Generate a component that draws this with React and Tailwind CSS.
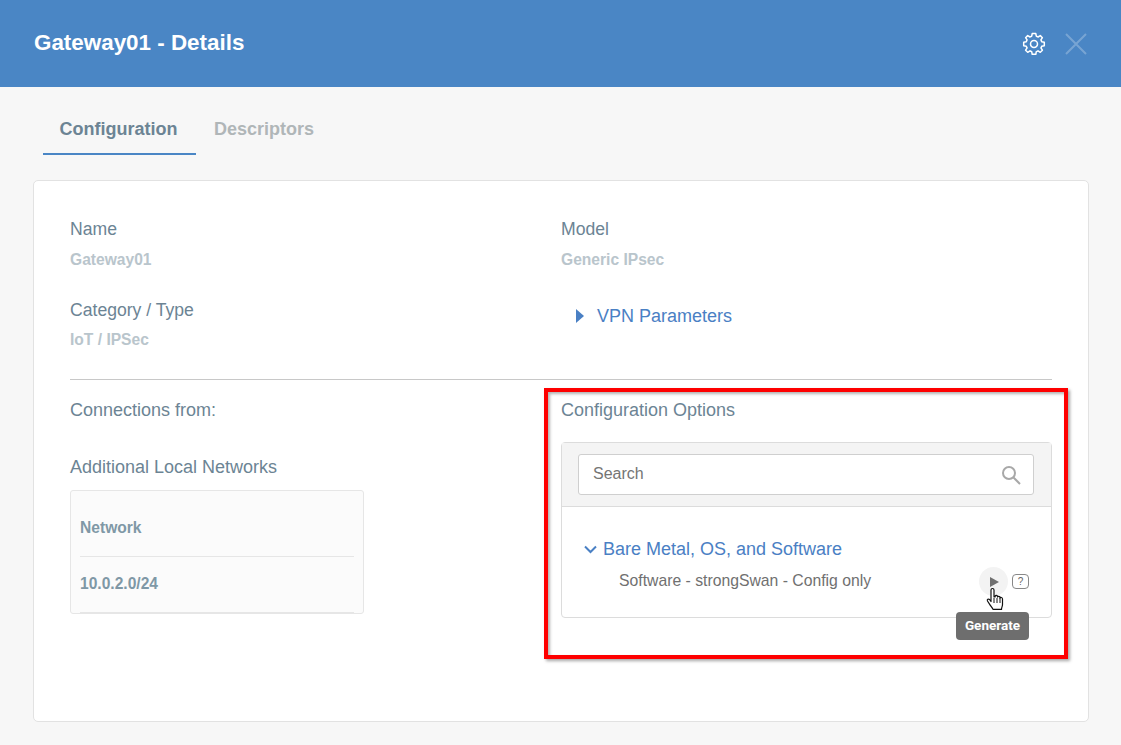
import React from "react";

const Arial = "font-['Liberation_Sans',Arial,sans-serif]";

function Field({ label, value, gap = "mt-[11px]" }) {
  return (
    <div>
      <div className="text-[17.6px] leading-[20px] text-[#6c8494]">{label}</div>
      <div className={`${gap} text-[15.6px] leading-[20px] font-bold text-[#b9c5cc]`}>{value}</div>
    </div>
  );
}

export default function App() {
  return (
    <div className={`relative w-[1121px] h-[745px] overflow-hidden bg-[#f7f7f7] ${Arial}`}>
      <header className="flex h-[87px] items-center justify-between bg-[#4a86c5] pl-[34px] pr-[33px]">
        <h1 className="pb-[2px] text-[22.4px] font-bold text-white">Gateway01 - Details</h1>
        <div className="flex items-center gap-[18px]">
          <svg width="24" height="24" viewBox="0 0 24 24" fill="none" stroke="#fff" strokeWidth="1.5" strokeLinecap="round" strokeLinejoin="round">
            <path d="M12 8.5a3.5 3.5 0 1 0 0 7 3.500 3.500 0 0 0 0-7z" />
            <path d="M10.2 1.6h3.6l.5 2.6c.6.2 1.2.4 1.7.8l2.3-1.4 2.1 2.1-1.500 2.200c.3.6.6 1.200.8 1.800l2.600.5v3.500l-2.600.5c-.2.6-.4 1.200-.8 1.700l1.500 2.300-2.100 2.100-2.300-1.500c-.5.3-1.100.6-1.700.8l-.5 2.700h-3.600l-.5-2.700c-.6-.2-1.200-.4-1.700-.8l-2.300 1.500-2.100-2.100 1.500-2.300c-.3-.5-.6-1.100-.8-1.700l-2.600-.5v-3.500l2.600-.5c.2-.6.4-1.200.8-1.800L3.600 5.700l2.100-2.100L8 5c.5-.4 1.100-.6 1.700-.8z" />
          </svg>
          <svg width="24" height="24" viewBox="0 0 24 24" fill="none" stroke="#fff" strokeOpacity="0.25" strokeWidth="2">
            <path d="M2 2l20 20M22 2L2 22" />
          </svg>
        </div>
      </header>

      <div className="flex pl-[43px] pt-[22px]">
        <div className="flex h-[46px] w-[153px] items-start justify-center border-b-2 border-[#4a86c5] pr-[2px] pt-[10px] text-[18px] leading-[20px] font-bold text-[#6c8494]">
          Configuration
        </div>
        <div className="ml-[18px] pt-[10px] text-[18px] leading-[20px] font-bold text-[#b0b6b8]">Descriptors</div>
      </div>

      <main className="mx-[33px] mt-[25px] h-[542px] w-[1056px] rounded-[5px] border border-[#e2e2e2] bg-white pl-[36px] pr-[36px] pt-[38px]">
        <div className="grid grid-cols-[491px_491px]">
          <div className="flex flex-col gap-[30px]">
            <Field label="Name" value="Gateway01" />
            <Field label="Category / Type" value="IoT / IPSec" gap="mt-[10px]" />
          </div>
          <div>
            <Field label="Model" value="Generic IPsec" />
            <div className="mt-[36px] flex items-center pl-[15px] text-[#4a80c4]">
              <svg width="8" height="14" viewBox="0 0 8 14" fill="currentColor"><path d="M0 0l8 7-8 7z" /></svg>
              <span className="ml-[13px] text-[18px] leading-[20px]">VPN Parameters</span>
            </div>
          </div>
        </div>

        <div className="mt-[29px] h-px bg-[#c8c8c8]" />

        <div className="grid grid-cols-[491px_491px] pt-[20px]">
          <div>
            <div className="text-[18px] leading-[20px] text-[#6c8494]">Connections from:</div>
            <div className="mt-[37px] text-[18px] leading-[20px] text-[#6c8494]">Additional Local Networks</div>
            <div className="mt-[13px] h-[124px] w-[294px] rounded-[3px] border border-[#e6e6e6] bg-[#fbfbfb] px-[9px] text-[15.6px] font-bold text-[#7f98a6]">
              <div className="flex h-[66px] items-center border-b border-[#e6e6e6] pt-[9px]">Network</div>
              <div className="flex h-[56px] items-center border-b border-[#e6e6e6] pb-[1px]">10.0.2.0/24</div>
            </div>
          </div>
          <div>
            <div className="text-[18px] leading-[20px] text-[#6c8494]">Configuration Options</div>
            <div className="mt-[22px] h-[176px] rounded-[4px] border border-[#dcdcdc] bg-white">
              <div className="flex h-[64px] items-center border-b border-[#dcdcdc] bg-[#f4f4f4] pl-[16px] pr-[17px]">
                <div className="flex h-[41px] flex-1 items-center justify-between rounded-[3px] border border-[#cfcfcf] bg-white pl-[14px] pr-[12px]">
                  <span className="pb-[2px] text-[16px] text-[#757575]">Search</span>
                  <svg width="20" height="20" viewBox="0 0 20 20" fill="none" stroke="#a8a8a8" strokeWidth="2"><circle cx="8" cy="8" r="6" /><path d="M12.5 12.5L19 19" /></svg>
                </div>
              </div>
              <div className="pl-[22px] pr-[22px] pt-[32px]">
                <div className="flex items-center text-[#4a80c4]">
                  <svg width="13" height="9" viewBox="0 0 13 9" fill="none" stroke="currentColor" strokeWidth="2"><path d="M1 1.5l5.500 5.500L12 1.500" /></svg>
                  <span className="ml-[6px] text-[18px] leading-[20px]">Bare Metal, OS, and Software</span>
                </div>
                <div className="mt-[8px] flex items-center justify-between pl-[35px]">
                  <span className="pb-[2px] text-[15.75px] leading-[20px] text-[#707070]">Software - strongSwan - Config only</span>
                  <div className="flex items-center gap-[4px]">
                    <div className="flex h-[29px] w-[29px] items-center justify-center rounded-full bg-[#f3f3f3] pl-[2px]">
                      <svg width="9" height="10" viewBox="0 0 9 10" fill="#707070"><path d="M0 0l9 5-9 5z" /></svg>
                    </div>
                    <div className="flex h-[15px] w-[17px] items-center justify-center rounded-[4px] border border-[#888] text-[10px] leading-none text-[#666]">?</div>
                  </div>
                </div>
              </div>
            </div>
          </div>
        </div>
      </main>

      {/* Annotation rectangle */}
      <div className="absolute left-[544px] top-[388px] h-[271px] w-[524px] border-[4px] border-[#fe0000] shadow-[2px_2px_3px_rgba(0,0,0,0.35),inset_2px_2px_3px_rgba(0,0,0,0.3)]" />

      {/* Tooltip */}
      <div className="absolute left-[956px] top-[612px] flex h-[28px] w-[73px] items-center justify-center rounded-[4px] bg-[#6e6e6e] pb-[2px] font-['Roboto',sans-serif] text-[13.5px] font-bold text-white">
        Generate
      </div>

      {/* Hand cursor */}
      <svg className="absolute left-[986px] top-[587px]" width="20" height="26" viewBox="0 0 20 26" fill="#fff" stroke="#111" strokeWidth="1.2" strokeLinejoin="round">
        <path d="M5 3c0-2 3-2 3 0v7l1.200-.2V9c0-1 2.300-1 2.300.3v.8c.3-1 2.500-1 2.500.4v.6c.3-1 2.500-.8 2.500.8v5.500c0 2-1 3-1 5H7c-.5-1.500-2-3-3-4.500L1.500 14c-.8-1.500 1-2.500 2-1.500L5 14.500z" />
        <path d="M8 11v5M11 11v5M14 11v5" fill="none" strokeWidth="1" />
      </svg>
    </div>
  );
}
